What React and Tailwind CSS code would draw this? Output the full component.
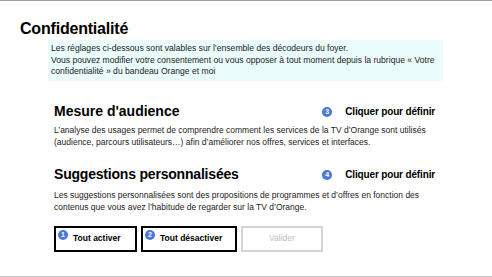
export default function App() {
  const Badge = ({ n, className = "" }) => (
    <span className={"inline-flex items-center justify-center w-[10px] h-[10px] rounded-full bg-[#4a78d8] text-white text-[7px] font-bold leading-none " + className}>{n}</span>
  );
  return (
    <div className="w-[492px] h-[277px] bg-white border-t border-t-[#a0a0a0] border-b border-b-[#c8c8c8] overflow-hidden text-black" style={{ fontFamily: '"Liberation Sans", Arial, sans-serif' }}>
      <h1 className="ml-[20px] mt-[17px] text-[16px] leading-[22px] font-bold tracking-[-0.2px]">Confidentialité</h1>
      <div className="ml-[48px] w-[395px] bg-[#eafcfc] px-[3px] py-[3px] text-[8.6px] leading-[11.5px] text-[#222] whitespace-nowrap">
        Les réglages ci-dessous sont valables sur l’ensemble des décodeurs du foyer.<br />
        Vous pouvez modifier votre consentement ou vous opposer à tout moment depuis la rubrique « Votre<br />
        confidentialité » du bandeau Orange et moi
      </div>
      <div className="ml-[54px] w-[381px]">
        <div className="mt-[22px] flex items-center justify-between h-[18px]">
          <span className="text-[14px] font-bold">Mesure d'audience</span>
          <span className="flex items-center gap-[13px] text-[10px] font-bold tracking-[-0.15px]"><Badge n="3" />Cliquer pour définir</span>
        </div>
        <p className="mt-[3px] text-[8.5px] leading-[12px] text-[#222] whitespace-nowrap">
          L’analyse des usages permet de comprendre comment les services de la TV d’Orange sont utilisés<br />
          (audience, parcours utilisateurs…) afin d’améliorer nos offres, services et interfaces.
        </p>
        <div className="mt-[18px] flex items-center justify-between h-[18px]">
          <span className="text-[14px] font-bold tracking-[-0.2px]">Suggestions personnalisées</span>
          <span className="flex items-center gap-[13px] text-[10px] font-bold tracking-[-0.15px]"><Badge n="4" />Cliquer pour définir</span>
        </div>
        <p className="mt-[5px] text-[8.5px] leading-[12px] text-[#222] whitespace-nowrap">
          Les suggestions personnalisées sont des propositions de programmes et d’offres en fonction des<br />
          contenus que vous avez l’habitude de regarder sur la TV d’Orange.
        </p>
        <div className="mt-[13px] flex gap-[4px]">
          <div className="relative w-[83px] h-[26px] border-2 border-black flex items-center pl-[17px] text-[8.5px] font-bold">
            <Badge n="1" className="absolute left-[2px] top-[2px]" />Tout activer
          </div>
          <div className="relative w-[96px] h-[26px] border-2 border-black flex items-center pl-[17px] text-[8.5px] font-bold">
            <Badge n="2" className="absolute left-[2px] top-[2px]" />Tout désactiver
          </div>
          <div className="w-[82px] h-[26px] border-2 border-[#d4d4d4] flex items-center justify-center text-[8.5px] text-[#c0c0c0]">
            Valider
          </div>
        </div>
      </div>
    </div>
  );
}
